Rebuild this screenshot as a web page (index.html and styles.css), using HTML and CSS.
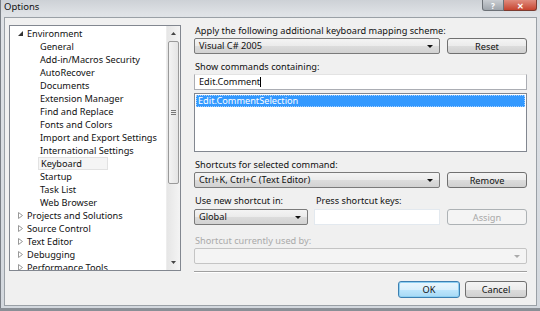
FILE: index.html
```html
<!DOCTYPE html>
<html lang="en">
<head>
    <meta charset="UTF-8">
    <title>Options</title>
    <link rel="stylesheet" href="styles.css">
</head>
<body>
    <div class="window">
        <div class="titlebar">
            <span class="title">Options</span>
            <div class="caption-buttons">
                <span class="cap-btn help">?</span>
                <span class="cap-btn close">&#x2715;</span>
            </div>
        </div>

        <div class="client">
            <div class="tree">
                <ul class="tree-items">
                    <li class="node open"><span class="exp"><svg width="5" height="5" viewBox="0 0 5 5"><polygon points="5,0 5,5 0,5" fill="#333"/></svg></span>Environment</li>
                    <li class="child">General</li>
                    <li class="child">Add-in/Macros Security</li>
                    <li class="child">AutoRecover</li>
                    <li class="child">Documents</li>
                    <li class="child">Extension Manager</li>
                    <li class="child">Find and Replace</li>
                    <li class="child">Fonts and Colors</li>
                    <li class="child">Import and Export Settings</li>
                    <li class="child">International Settings</li>
                    <li class="child selected">Keyboard</li>
                    <li class="child">Startup</li>
                    <li class="child">Task List</li>
                    <li class="child">Web Browser</li>
                    <li class="node"><span class="exp"><svg width="5" height="7" viewBox="0 0 5 7"><polygon points="0.5,0.5 4.5,3.5 0.5,6.5" fill="none" stroke="#999"/></svg></span>Projects and Solutions</li>
                    <li class="node"><span class="exp"><svg width="5" height="7" viewBox="0 0 5 7"><polygon points="0.5,0.5 4.5,3.5 0.5,6.5" fill="none" stroke="#999"/></svg></span>Source Control</li>
                    <li class="node"><span class="exp"><svg width="5" height="7" viewBox="0 0 5 7"><polygon points="0.5,0.5 4.5,3.5 0.5,6.5" fill="none" stroke="#999"/></svg></span>Text Editor</li>
                    <li class="node"><span class="exp"><svg width="5" height="7" viewBox="0 0 5 7"><polygon points="0.5,0.5 4.5,3.5 0.5,6.5" fill="none" stroke="#999"/></svg></span>Debugging</li>
                    <li class="node"><span class="exp"><svg width="5" height="7" viewBox="0 0 5 7"><polygon points="0.5,0.5 4.5,3.5 0.5,6.5" fill="none" stroke="#999"/></svg></span>Performance Tools</li>
                </ul>
                <div class="scrollbar">
                    <div class="sb-arrow"><svg width="5" height="3" viewBox="0 0 5 3"><polygon points="0,3 2.5,0 5,3" fill="#444"/></svg></div>
                    <div class="sb-track">
                        <div class="sb-thumb"><span class="grip"></span></div>
                    </div>
                    <div class="sb-arrow"><svg width="5" height="3" viewBox="0 0 5 3"><polygon points="0,0 2.5,3 5,0" fill="#444"/></svg></div>
                </div>
            </div>

            <div class="panel">
                <label class="lbl">Apply the following additional keyboard mapping scheme:</label>
                <div class="row">
                    <div class="combo grow">Visual C# 2005<span class="arrow"></span></div>
                    <button class="btn">Reset</button>
                </div>

                <label class="lbl gap">Show commands containing:</label>
                <div class="textbox">Edit.Comment<span class="caret"></span></div>

                <div class="listbox">
                    <div class="list-item selected">Edit.CommentSelection</div>
                </div>

                <label class="lbl gap">Shortcuts for selected command:</label>
                <div class="row">
                    <div class="combo grow">Ctrl+K, Ctrl+C (Text Editor)<span class="arrow"></span></div>
                    <button class="btn">Remove</button>
                </div>

                <div class="row labels">
                    <label class="lbl scope-col">Use new shortcut in:</label>
                    <label class="lbl">Press shortcut keys:</label>
                </div>
                <div class="row">
                    <div class="combo scope-col">Global<span class="arrow"></span></div>
                    <div class="textbox keys"></div>
                    <button class="btn" disabled>Assign</button>
                </div>

                <label class="lbl gap-lg disabled">Shortcut currently used by:</label>
                <div class="combo disabled">&nbsp;<span class="arrow"></span></div>

                <div class="separator"></div>

                <div class="footer">
                    <button class="btn default">OK</button>
                    <button class="btn">Cancel</button>
                </div>
            </div>
        </div>
    </div>
</body>
</html>
```

FILE: styles.css
```css
* {
    box-sizing: border-box;
}
body {
    margin: 0;
    width: 540px;
    height: 311px;
    overflow: hidden;
    font-family: "Noto Sans", Arial, sans-serif;
    font-size: 9.2px;
    background: #8a8f96;
}
.window {
    width: 540px;
    height: 308px;
    padding: 0 3px 2px 3px;
    display: flex;
    flex-direction: column;
    background: linear-gradient(180deg, #cdd1d6 0px, #dfe2e6 14px, #d3d8de 100%);
    border-left: 1px solid #7a7f86;
}
.titlebar {
    height: 17px;
    display: flex;
    align-items: flex-start;
    justify-content: space-between;
}
.title {
    font-size: 9.5px;
    line-height: 14px;
    color: #111;
}
.caption-buttons {
    display: flex;
}
.cap-btn {
    height: 11px;
    display: flex;
    align-items: center;
    justify-content: center;
    font-size: 8px;
    font-weight: bold;
    color: #fff;
    border: 1px solid #6c7177;
    border-top: none;
}
.help {
    width: 22px;
    background: linear-gradient(180deg, #c9cdd2, #9fa5ac);
    border-radius: 0 0 0 3px;
}
.close {
    width: 33px;
    background: linear-gradient(180deg, #e08c7e, #c7442f);
    border-left: none;
    border-color: #7b3b30;
    border-radius: 0 0 3px 0;
}
.client {
    flex: 1;
    display: flex;
    padding: 7px 9px 0 4px;
    background: #f0f0f0;
    border: 1px solid #9aa0a6;
}

/* tree view */
.tree {
    width: 175px;
    height: 246px;
    display: flex;
    background: #fff;
    border: 1px solid #828790;
}
.tree-items {
    flex: 1;
    list-style: none;
    margin: 0;
    padding: 1px 0 0 0;
    overflow: hidden;
}
.tree-items li {
    height: 13px;
    line-height: 13px;
    white-space: nowrap;
    color: #111;
}
.tree-items .node {
    padding-left: 8px;
    display: flex;
    align-items: center;
}
.tree-items .exp {
    width: 9px;
    display: flex;
    align-items: center;
}
.tree-items .child {
    padding-left: 30px;
}
.tree-items .selected {
    width: 70px;
    margin-left: 28px;
    padding-left: 2px;
    background: #f5f5f5;
    border: 1px solid #e2e2e2;
    line-height: 11px;
}
.scrollbar {
    width: 14px;
    display: flex;
    flex-direction: column;
    background: linear-gradient(90deg, #e6e6e6, #f4f4f4);
    border-left: 1px solid #ededed;
}
.sb-arrow {
    height: 15px;
    display: flex;
    align-items: center;
    justify-content: center;
}
.sb-track {
    flex: 1;
}
.sb-thumb {
    height: 143px;
    margin: 0 1px;
    display: flex;
    align-items: center;
    justify-content: center;
    background: linear-gradient(90deg, #f3f3f3, #e4e4e4);
    border: 1px solid #9a9a9a;
    border-radius: 2px;
}
.grip {
    width: 5px;
    height: 5px;
    border-top: 1px solid #777;
    border-bottom: 1px solid #777;
}
.grip::after {
    content: "";
    display: block;
    height: 1px;
    margin-top: 1px;
    background: #777;
}

/* right panel */
.panel {
    flex: 1;
    margin-left: 13px;
    display: flex;
    flex-direction: column;
}
.lbl {
    display: block;
    height: 12px;
    line-height: 12px;
    margin-bottom: 1px;
    padding-left: 1px;
    color: #111;
    white-space: nowrap;
}
.lbl.gap {
    margin-top: 7px;
}
.lbl.gap-lg {
    margin-top: 10px;
}
.lbl.disabled {
    color: #aaa;
}
.row {
    display: flex;
    gap: 7px;
}
.row.labels {
    margin-top: 7px;
    margin-bottom: 2px;
}
.row.labels .lbl {
    margin-bottom: 0;
}
.grow {
    flex: 1;
}
.scope-col {
    width: 114px;
    flex: none;
}
.combo {
    height: 16px;
    padding: 0 4px;
    line-height: 14px;
    position: relative;
    color: #111;
    background: linear-gradient(180deg, #f4f4f4 0%, #ebebeb 50%, #dcdcdc 51%, #d2d2d2 100%);
    border: 1px solid #7a7a7a;
    border-radius: 2px;
}
.combo .arrow {
    position: absolute;
    right: 6px;
    top: 6px;
    border-left: 3px solid transparent;
    border-right: 3px solid transparent;
    border-top: 3px solid #111;
}
.combo.disabled {
    background: #f4f4f4;
    border-color: #c4c4c4;
}
.combo.disabled .arrow {
    border-top-color: #aaa;
}
.btn {
    width: 80px;
    height: 16px;
    padding: 0;
    font-family: inherit;
    font-size: 9.2px;
    color: #111;
    background: linear-gradient(180deg, #f4f4f4 0%, #ebebeb 50%, #dcdcdc 51%, #d0d0d0 100%);
    border: 1px solid #707070;
    border-radius: 3px;
}
.btn:disabled {
    color: #a8a8a8;
    background: #f4f4f4;
    border-color: #adb2b5;
}
.btn.default {
    background: linear-gradient(180deg, #eaf6fd 0%, #d9f0fc 50%, #bee6fd 51%, #a7d9f5 100%);
    border-color: #3c7fb1;
    box-shadow: inset 0 0 0 1px #8fd0f2;
}
.textbox {
    height: 16px;
    padding: 0 4px;
    line-height: 14px;
    color: #111;
    background: #fff;
    border: 1px solid #abadb3;
    border-top-color: #e3e3e3;
}
.textbox.keys {
    width: 126px;
    flex: none;
    margin-left: -1px;
    border: 1px solid #e3e9ef;
}
.caret {
    display: inline-block;
    width: 1px;
    height: 10px;
    vertical-align: -2px;
    background: #000;
}
.listbox {
    height: 59px;
    margin-top: 3px;
    padding: 1px;
    background: #fff;
    border: 1px solid #828790;
}
.list-item {
    height: 12px;
    line-height: 12px;
    padding-left: 2px;
}
.list-item.selected {
    color: #fff;
    background: #3399ff;
    outline: 1px dotted #a8d2ff;
    outline-offset: -1px;
}
.separator {
    height: 2px;
    margin-top: 7px;
    border-top: 1px solid #a0a0a0;
    border-bottom: 1px solid #fff;
}
.footer {
    margin-top: 8px;
    display: flex;
    justify-content: flex-end;
    gap: 5px;
}
.footer .btn {
    width: 62px;
    height: 17px;
}
```
